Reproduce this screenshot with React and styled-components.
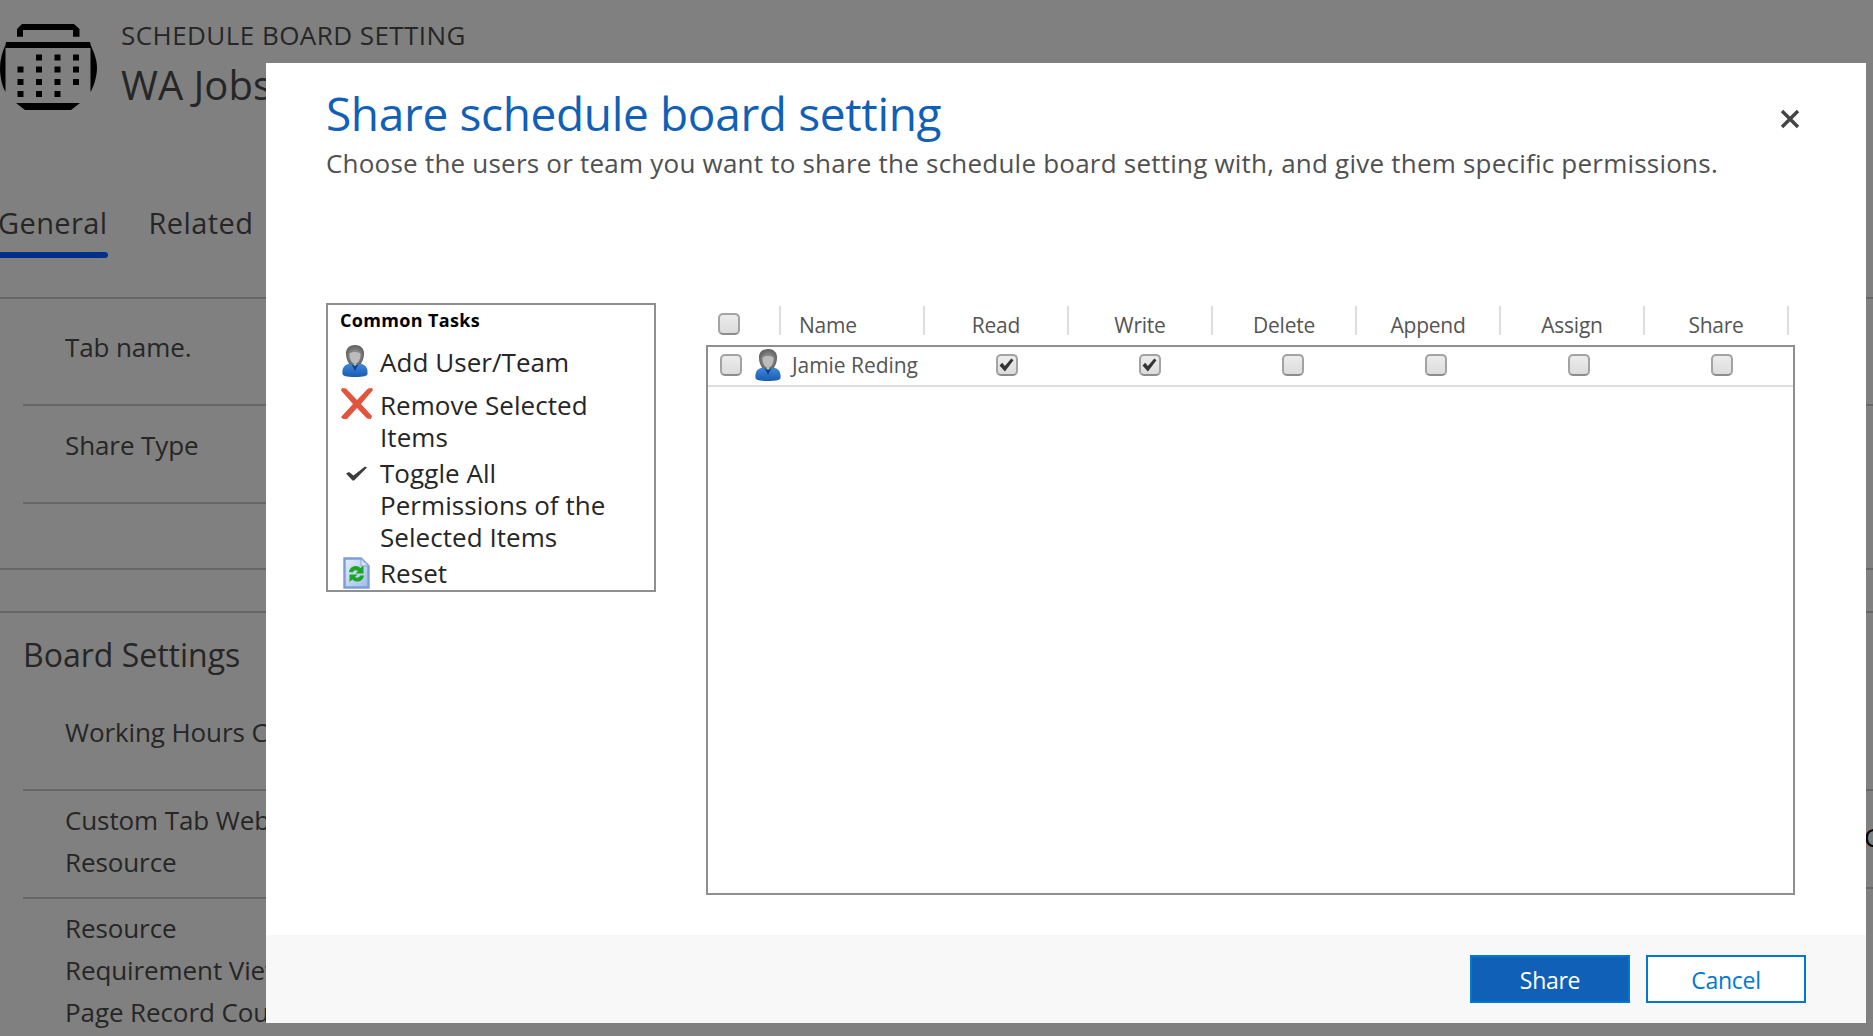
import React from 'react'
import styled, { createGlobalStyle } from 'styled-components'

const GlobalStyle = createGlobalStyle`
  html, body {
    margin: 0;
    padding: 0;
    height: 100%;
    overflow: hidden;
    background: #808080;
    font-family: "Open Sans", "Noto Sans", "Liberation Sans", sans-serif;
  }
  * {
    box-sizing: border-box;
  }
`

const Page = styled.div`
  width: 1873px;
  height: 1036px;
  overflow: hidden;
  background: #808080;
  color: #262626;
`

const Header = styled.header`
  display: flex;
  height: 110px;
  padding-top: 24px;
`

const HeaderText = styled.div`
  margin-left: 23px;
  margin-top: -9px;
`

const EntityType = styled.div`
  font-size: 26px;
  line-height: 40px;
  white-space: nowrap;
  letter-spacing: 0.45px;
`

const RecordName = styled.div`
  margin-top: 3px;
  font-size: 40px;
  line-height: 54px;
  white-space: nowrap;
`

const Tabs = styled.nav`
  display: flex;
  gap: 41px;
  height: 187px;
  padding-top: 93px;
  margin-left: -2px;
`

const Tab = styled.div`
  position: relative;
  font-size: 29px;
  line-height: 40px;
  height: 55px;
  letter-spacing: 0.4px;
  ${(p) =>
    p.$active &&
    `&::after {
      content: "";
      position: absolute;
      left: 0;
      right: 0;
      bottom: 0;
      height: 6px;
      border-radius: 3px;
      background: #00318a;
    }`}
`

const Section = styled.section`
  display: grid;
  grid-template-columns: 936px 937px;
  border-top: 2px solid #666;
`

const Spacer = styled.div`
  height: 43px;
  border-top: 2px solid #666;
`

const Column = styled.div`
  display: flex;
  flex-direction: column;
`

const FieldRow = styled.div`
  height: ${(p) => p.$height}px;
  padding-top: ${(p) => p.$pad}px;
  margin-left: ${(p) => (p.$far ? 924 : 23)}px;
  border-bottom: ${(p) => (p.$open ? 'none' : '2px solid #666')};
`

const Label = styled.div`
  margin-left: ${(p) => (p.$clipped ? 4 : 42)}px;
  font-size: 26px;
  line-height: 42px;
  white-space: nowrap;
  letter-spacing: -0.1px;
  color: ${(p) => (p.$clipped ? '#000' : '#262626')};
`

const GroupTitle = styled.div`
  font-size: 32px;
  line-height: 44px;
  white-space: nowrap;
  margin-bottom: 34px;
`

const Modal = styled.div`
  position: fixed;
  left: 266px;
  top: 63px;
  width: 1600px;
  height: 960px;
  display: flex;
  flex-direction: column;
  background: #fff;
`

const ModalBody = styled.div`
  flex: 1;
  padding: 18px 66px 0 60px;
`

const TitleRow = styled.div`
  display: flex;
  justify-content: space-between;
  align-items: flex-start;
`

const Title = styled.h1`
  margin: 0;
  font-size: 46px;
  line-height: 64px;
  font-weight: 400;
  color: #1160b7;
  letter-spacing: -0.35px;
`

const Subtitle = styled.p`
  margin: 1px 0 0;
  font-size: 26px;
  line-height: 34px;
  color: #505050;
  letter-spacing: 0.22px;
`

const CloseButton = styled.button`
  display: block;
  width: 20px;
  height: 20px;
  margin-top: 28px;
  padding: 0;
  border: none;
  background: none;
  color: #444;
`

const Content = styled.div`
  display: flex;
  gap: 50px;
  margin-top: 123px;
`

const TasksBox = styled.div`
  flex: none;
  width: 330px;
  height: 289px;
  padding: 1px 0 0 12px;
  border: 2px solid #8f8f8f;
`

const TasksTitle = styled.div`
  font-size: 18px;
  font-weight: 700;
  line-height: 28px;
  margin-bottom: 12px;
  color: #000;
  letter-spacing: 0.35px;
`

const TaskList = styled.div`
  display: flex;
  flex-direction: column;
  gap: 4px;
`

const Task = styled.div`
  display: flex;
  min-height: ${(p) => (p.$tall ? 39 : 32)}px;
  font-size: 26px;
  line-height: 32px;
  color: #262626;
  letter-spacing: 0.05px;
`

const TaskIcon = styled.div`
  flex: none;
  width: 40px;
  display: flex;
  padding-left: ${(p) => p.$left || 0}px;
  margin-top: ${(p) => p.$top || 0}px;
  height: 0;
`

const GridArea = styled.div`
  flex: 1;
  margin-top: 3px;
  margin-right: 5px;
`

const HeaderRow = styled.div`
  display: grid;
  grid-template-columns: 75px repeat(7, 144px);
  height: 39px;
`

const HeaderCell = styled.div`
  display: flex;
  align-items: flex-end;
  justify-content: ${(p) => (p.$left ? 'flex-start' : 'center')};
  height: 29px;
  padding-left: ${(p) => p.$pad || 0}px;
  border-right: 2px solid #ddd;
  font-size: 21px;
  line-height: 20px;
  color: #555;
  letter-spacing: -0.25px;
`

const GridBox = styled.div`
  height: 550px;
  border: 2px solid #8f8f8f;
`

const GridRow = styled.div`
  display: grid;
  grid-template-columns: 227px repeat(6, 143px);
  height: 40px;
  padding-bottom: 2px;
  border-bottom: 2px solid #ddd;
`

const UserCell = styled.div`
  display: flex;
  align-items: center;
  padding-left: 12px;
  font-size: 21px;
  color: #555;
  letter-spacing: -0.05px;
`

const Avatar = styled.div`
  display: flex;
  margin-left: 13px;
  margin-right: 11px;
`

const PermissionCell = styled.div`
  display: flex;
  align-items: center;
  justify-content: center;
`

const CheckBox = styled.span`
  flex: none;
  display: flex;
  align-items: center;
  justify-content: center;
  width: 22px;
  height: 22px;
  border: 2px solid #a3a3a3;
  border-bottom-color: #8c8c8c;
  border-radius: 5px;
  background: linear-gradient(#ececec, #dcdcdc);
  color: #333;
`

const Footer = styled.footer`
  flex: none;
  display: flex;
  justify-content: flex-end;
  align-items: center;
  gap: 16px;
  height: 88px;
  padding-right: 60px;
  background: #f8f8f8;
`

const Button = styled.button`
  width: 160px;
  height: 48px;
  padding: 2px 0 0;
  border: 2px solid #0078d4;
  background: ${(p) => (p.$primary ? '#1160b7' : '#fff')};
  color: ${(p) => (p.$primary ? '#fff' : '#0078d4')};
  font-family: inherit;
  font-size: 23px;
  letter-spacing: -0.3px;
`

function CalendarIcon() {
  const dots = [
    [36, 30.5], [54.5, 30.5], [73, 30.5],
    [17.5, 42.5], [36, 42.5], [54.5, 42.5], [73, 42.5],
    [17.5, 55], [36, 55], [54.5, 55], [73, 55],
    [17.5, 67], [36, 67], [54.5, 67],
  ]
  return (
    <svg width="98" height="86" viewBox="0 0 98 86" fill="#000">
      <path d="M22 0H74L79.5 5V12.7H73V6H23V12.7H17V5Z" />
      <path d="M6 18H90L91.5 24H5Z" />
      <path d="M5.5 24V68C1 60 0 50 0 44C0 36 2 28 5.5 21Z" />
      <path d="M90.5 24V68C95 60 97 50 97 44C97 36 94 28 90.5 21Z" />
      <path d="M16 79H80L71 86H25Z" />
      {dots.map(([x, y]) => (
        <rect key={`${x}-${y}`} x={x} y={y} width="6" height="6" />
      ))}
    </svg>
  )
}

function UserIcon() {
  return (
    <svg width="26" height="32" viewBox="0 0 26 32">
      <defs>
        <linearGradient id="shirt" x1="0" y1="0" x2="0" y2="1">
          <stop offset="0" stopColor="#3f8ddf" />
          <stop offset="1" stopColor="#1a5bb0" />
        </linearGradient>
        <radialGradient id="hair" cx="0.5" cy="0.55" r="0.6">
          <stop offset="0" stopColor="#a8a8a8" />
          <stop offset="1" stopColor="#585858" />
        </radialGradient>
      </defs>
      <path
        d="M0.5 29C0 24 1.5 20.5 6 19L9 17.5L13 21L17 17.5L20 19C24.5 20.5 26 24 25.5 29C25 31 22 32 13 32C4 32 1 31 0.5 29Z"
        fill="url(#shirt)"
      />
      <path d="M9 18L13 26L17 18L13 21Z" fill="#0e4289" />
      <path
        d="M13 0C19 0 22.5 4 22 9.5C21.8 13.5 20.5 17 18 19.5H8C5.5 17 4.2 13.5 4 9.5C3.5 4 7 0 13 0Z"
        fill="url(#hair)"
      />
      <path d="M7.5 8.5C10 6.5 16 6.5 18.5 8.5C19 13.5 16 19 13 19C10 19 7 13.5 7.5 8.5Z" fill="#bcbcbc" />
    </svg>
  )
}

function RemoveIcon() {
  return (
    <svg width="32" height="32" viewBox="0 0 32 32">
      <path
        d="M1 0L5 0.5L16 12L27 0.5L31 0L32 2L20 16L31 28L30 31L26 30.5L16 20L6 31H2L0 29L12 16L0 2.5Z"
        fill="#e2553c"
      />
    </svg>
  )
}

function ToggleIcon() {
  return (
    <svg width="21" height="16" viewBox="0 0 21 16">
      <path d="M0 8.5L3 7L7.5 10.5L19 1.5L21 2.5L8 15.5H6.5Z" fill="#3c3c3c" />
    </svg>
  )
}

function ResetIcon() {
  return (
    <svg width="27" height="32" viewBox="0 0 27 32">
      <defs>
        <linearGradient id="sheet" x1="0" y1="0" x2="1" y2="1">
          <stop offset="0" stopColor="#e4eefb" />
          <stop offset="1" stopColor="#9dbdec" />
        </linearGradient>
      </defs>
      <path d="M1.5 1.5H18L25.5 9V30.5H1.5Z" fill="url(#sheet)" stroke="#7d9cd8" strokeWidth="2.4" />
      <path d="M18 1.5V9H25.5Z" fill="#d5e3f7" stroke="#8aa5d6" strokeWidth="1" />
      <path d="M6 15C6.5 9 14 7 17.5 11L20.5 8.5V16.5H12.5L15 14C13 12.5 10.5 13.5 9.8 15.5Z" fill="#1ca524" />
      <path d="M21 18.5C20.5 24.5 13 26.5 9.5 22.5L6.5 25V17.5H14.5L12 20C14 21.5 16.5 20.5 17.2 18.5Z" fill="#1ca524" />
    </svg>
  )
}

function CheckMark() {
  return (
    <svg width="15" height="14" viewBox="0 0 14 13">
      <path d="M0.5 7L3 4.5L5.5 7.5L11.5 0.5L13.5 2L5.5 12.5Z" fill="currentColor" />
    </svg>
  )
}

function Check({ checked }) {
  return <CheckBox>{checked && <CheckMark />}</CheckBox>
}

const columns = ['Read', 'Write', 'Delete', 'Append', 'Assign', 'Share']

function App() {
  return (
    <Page>
      <GlobalStyle />
      <Header>
        <CalendarIcon />
        <HeaderText>
          <EntityType>SCHEDULE BOARD SETTING</EntityType>
          <RecordName>WA Jobs</RecordName>
        </HeaderText>
      </Header>
      <Tabs>
        <Tab $active>General</Tab>
        <Tab>Related</Tab>
      </Tabs>
      <Section>
        <Column>
          <FieldRow $height={107} $pad={27}>
            <Label>Tab name.</Label>
          </FieldRow>
          <FieldRow $height={98} $pad={18}>
            <Label>Share Type</Label>
          </FieldRow>
          <FieldRow $height={64} $open />
        </Column>
        <Column>
          <FieldRow $far $height={107} />
          <FieldRow $far $height={162} $open />
        </Column>
      </Section>
      <Spacer />
      <Section>
        <Column>
          <FieldRow $height={178} $pad={20}>
            <GroupTitle>Board Settings</GroupTitle>
            <Label>Working Hours Calendar</Label>
          </FieldRow>
          <FieldRow $height={108} $pad={8}>
            <Label>
              Custom Tab Web
              <br />
              Resource
            </Label>
          </FieldRow>
          <FieldRow $height={140} $pad={8} $open>
            <Label>
              Resource
              <br />
              Requirement View
              <br />
              Page Record Count
            </Label>
          </FieldRow>
        </Column>
        <Column>
          <FieldRow $far $height={178} />
          <FieldRow $far $height={98} $pad={25}>
            <Label $clipped>Custom</Label>
          </FieldRow>
        </Column>
      </Section>

      <Modal>
        <ModalBody>
          <TitleRow>
            <div>
              <Title>Share schedule board setting</Title>
              <Subtitle>
                Choose the users or team you want to share the schedule board setting with, and give them specific permissions.
              </Subtitle>
            </div>
            <CloseButton aria-label="Close">
              <svg width="20" height="20" viewBox="0 0 20 20">
                <path d="M2 2L18 18M18 2L2 18" stroke="currentColor" strokeWidth="3.4" />
              </svg>
            </CloseButton>
          </TitleRow>
          <Content>
            <TasksBox>
              <TasksTitle>Common Tasks</TasksTitle>
              <TaskList>
                <Task $tall>
                  <TaskIcon $left={2} $top={-1}>
                    <UserIcon />
                  </TaskIcon>
                  Add User/Team
                </Task>
                <Task>
                  <TaskIcon $left={1} $top={-1}>
                    <RemoveIcon />
                  </TaskIcon>
                  <div>
                    Remove Selected
                    <br />
                    Items
                  </div>
                </Task>
                <Task>
                  <TaskIcon $left={6} $top={8}>
                    <ToggleIcon />
                  </TaskIcon>
                  <div>
                    Toggle All
                    <br />
                    Permissions of the
                    <br />
                    Selected Items
                  </div>
                </Task>
                <Task>
                  <TaskIcon $left={3}>
                    <ResetIcon />
                  </TaskIcon>
                  Reset
                </Task>
              </TaskList>
            </TasksBox>
            <GridArea>
              <HeaderRow>
                <HeaderCell $left $pad={12}>
                  <Check />
                </HeaderCell>
                <HeaderCell $left $pad={18}>Name</HeaderCell>
                {columns.map((c) => (
                  <HeaderCell key={c}>{c}</HeaderCell>
                ))}
              </HeaderRow>
              <GridBox>
                <GridRow>
                  <UserCell>
                    <Check />
                    <Avatar>
                      <UserIcon />
                    </Avatar>
                    Jamie Reding
                  </UserCell>
                  {columns.map((c, i) => (
                    <PermissionCell key={c}>
                      <Check checked={i < 2} />
                    </PermissionCell>
                  ))}
                </GridRow>
              </GridBox>
            </GridArea>
          </Content>
        </ModalBody>
        <Footer>
          <Button $primary>Share</Button>
          <Button>Cancel</Button>
        </Footer>
      </Modal>
    </Page>
  )
}

export default App
